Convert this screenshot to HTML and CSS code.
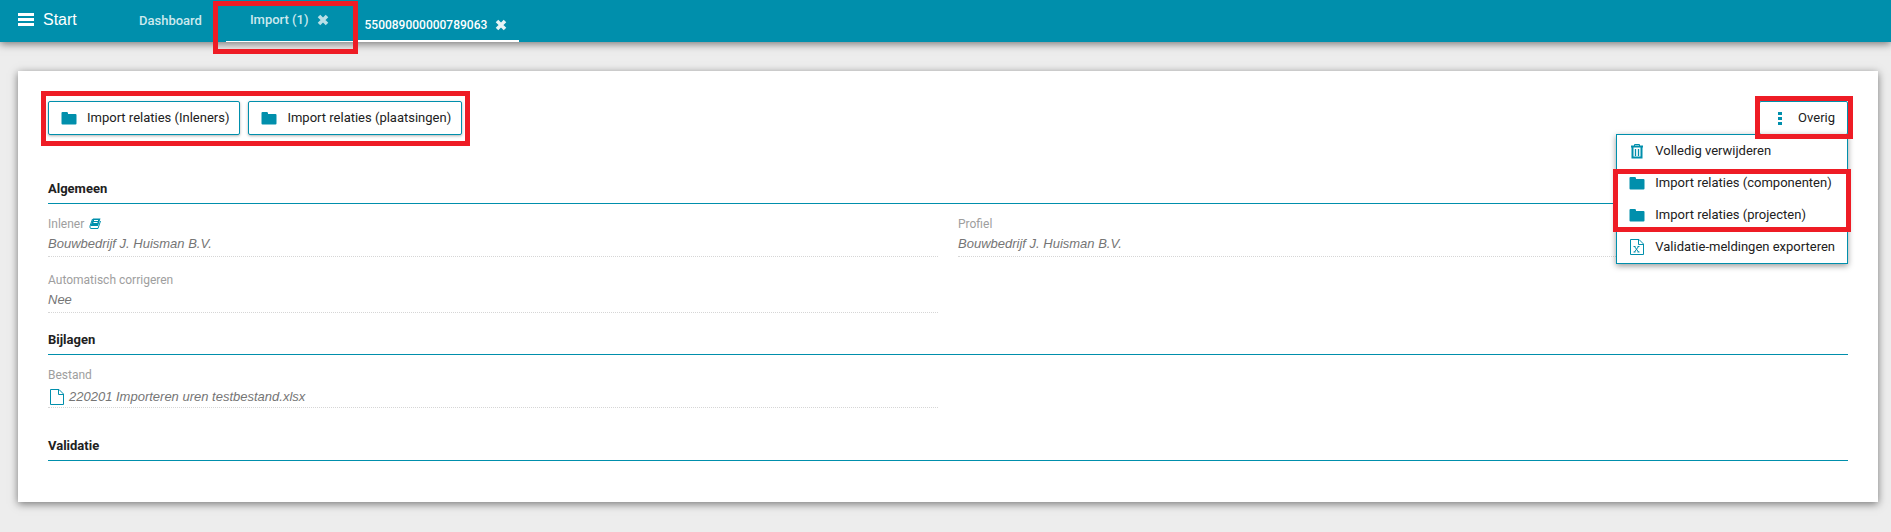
FILE: index.html
```html
<!DOCTYPE html>
<html lang="nl">
<head>
    <meta charset="UTF-8">
    <meta name="viewport" content="width=device-width, initial-scale=1.0">
    <title>Import</title>
    <link rel="stylesheet" href="styles.css">
</head>
<body>

    <!-- Shared icons -->
    <svg class="sprite" aria-hidden="true">
        <symbol id="folder" viewBox="0 0 16 16">
            <path d="M1.5 2h4.2q1.3 0 1.3 1.3V4h7.5q1 0 1 1v8.5q0 1-1 1h-13q-1 0-1-1V3q0-1 1-1z" fill="currentColor"/>
        </symbol>
        <symbol id="close" viewBox="0 0 12 12">
            <path d="M2 2l8 8M10 2l-8 8" stroke="currentColor" stroke-width="3.6" fill="none"/>
        </symbol>
        <symbol id="file" viewBox="0 0 16 16">
            <path d="M1.5.5H10L14.5 5v10.5h-13zM9.500.5v5h5" stroke="currentColor" fill="none"/>
        </symbol>
    </svg>

    <header class="topbar">
        <button type="button" class="start-button">
            <svg class="menu-icon" viewBox="0 0 16 14"><path d="M0 0h16v3H0zM0 5h16v3H0zM0 10h16v3H0z" fill="currentColor"/></svg>
            Start
        </button>
        <nav class="tabs">
            <a href="#" class="tab">Dashboard</a>
            <div class="tab tab-import highlight">
                <a href="#">Import (1)</a>
                <button type="button" class="close-button" aria-label="Sluiten"><svg><use href="#close"/></svg></button>
            </div>
            <div class="tab tab-active">
                <a href="#">550089000000789063</a>
                <button type="button" class="close-button" aria-label="Sluiten"><svg><use href="#close"/></svg></button>
            </div>
        </nav>
    </header>

    <main class="card">
        <div class="toolbar">
            <div class="button-group highlight">
                <button type="button" class="button"><svg class="icon"><use href="#folder"/></svg>Import relaties (Inleners)</button>
                <button type="button" class="button"><svg class="icon"><use href="#folder"/></svg>Import relaties (plaatsingen)</button>
            </div>
            <div class="dropdown">
                <button type="button" class="button button-more highlight">
                    <svg class="icon" viewBox="0 0 16 16"><path d="M6 2h4v3H6zM6 7h4v3H6zM6 12h4v3H6z" fill="currentColor"/></svg>Overig
                </button>
                <div class="menu">
                    <button type="button" class="menu-item">
                        <svg class="icon" viewBox="0 0 16 16"><path d="M5.500 3V1.500h5V3" stroke="currentColor" fill="none"/><path d="M2 3.500h12M3.500 4v10.500h9V4" stroke="currentColor" stroke-width="2" fill="none"/><path d="M6.500 6v7M9.500 6v7" stroke="currentColor" stroke-width="1.300" fill="none"/></svg>Volledig verwijderen
                    </button>
                    <div class="menu-group highlight">
                        <button type="button" class="menu-item"><svg class="icon"><use href="#folder"/></svg>Import relaties (componenten)</button>
                        <button type="button" class="menu-item"><svg class="icon"><use href="#folder"/></svg>Import relaties (projecten)</button>
                    </div>
                    <button type="button" class="menu-item">
                        <svg class="icon" viewBox="0 0 16 16"><path d="M1.500.5H10L14.500 5v10.500h-13zM9.500.5v5h5M5.500 7.500l4 5.500M9.500 7.500l-4 5.500M4.500 7.500h2M8.500 7.500h2M4.500 13h2M8.500 13h2" stroke="currentColor" fill="none"/></svg>Validatie-meldingen exporteren
                    </button>
                </div>
            </div>
        </div>

        <section class="section section-first">
            <h2>Algemeen</h2>
            <dl class="fields">
                <div class="field">
                    <dt>Inlener <svg class="book-icon" viewBox="0 0 12 12"><path d="M4 .5h7.500L9 8H1.500z" fill="currentColor"/><path d="M3.500 1L1 8q-.5 2.500 1 2.500h7L11.500 3" stroke="currentColor" fill="none"/><path d="M5 2.500h4M4.500 4.500h4" stroke="#fff" fill="none"/></svg></dt>
                    <dd>Bouwbedrijf J. Huisman B.V.</dd>
                </div>
                <div class="field">
                    <dt>Profiel</dt>
                    <dd>Bouwbedrijf J. Huisman B.V.</dd>
                </div>
                <div class="field">
                    <dt>Automatisch corrigeren</dt>
                    <dd>Nee</dd>
                </div>
            </dl>
        </section>

        <section class="section section-files">
            <h2>Bijlagen</h2>
            <dl class="fields">
                <div class="field">
                    <dt>Bestand</dt>
                    <dd class="file"><svg class="icon"><use href="#file"/></svg>220201 Importeren uren testbestand.xlsx</dd>
                </div>
            </dl>
        </section>

        <section class="section">
            <h2>Validatie</h2>
        </section>
    </main>

</body>
</html>
```
FILE: styles.css
```css
/* Global Styles */
* {
    margin: 0;
    padding: 0;
    box-sizing: border-box;
}

body {
    font-family: Roboto, "Liberation Sans", sans-serif;
    font-size: 13px;
    line-height: 16px;
    color: #212121;
    background-color: #ededed;
}

button {
    font: inherit;
    color: inherit;
    background: none;
    border: none;
    cursor: pointer;
}

a {
    color: inherit;
    text-decoration: none;
}

.sprite {
    display: none;
}

.icon {
    width: 16px;
    height: 16px;
    flex: none;
    color: #008fac;
}

/* Red marker around the import parts */
.highlight {
    position: relative;
}

.highlight::after {
    content: "";
    position: absolute;
    border: 5px solid #ee1c25;
    pointer-events: none;
    z-index: 5;
}

/* Top Bar */
.topbar {
    position: relative;
    display: flex;
    height: 42px;
    padding-left: 18px;
    color: #ffffff;
    background-color: #008fac;
    box-shadow: 0 2px 8px rgba(0, 0, 0, 0.5);
}

.start-button {
    display: flex;
    align-items: center;
    gap: 9px;
    width: 97px;
    padding-bottom: 3px;
    font-family: "Liberation Sans", sans-serif;
    font-size: 16px;
}

.menu-icon {
    width: 16px;
    height: 14px;
}

.tabs {
    display: flex;
}

.tab {
    display: flex;
    align-items: center;
    gap: 8px;
    padding: 0 24px 1px;
    font-weight: 500;
    color: #cce9ee;
}

.tab-import {
    border-bottom: 1px solid #ffffff;
}

.tab-import::after {
    top: 1px;
    right: -5px;
    bottom: -13px;
    left: -13px;
}

.tab-active {
    padding: 10px 12px 0;
    font-size: 12px;
    color: #ffffff;
    border-bottom: 2px solid #ffffff;
}

.close-button {
    display: flex;
    opacity: 0.9;
}

.close-button svg {
    width: 12px;
    height: 12px;
}

/* Card */
.card {
    margin: 29px 13px 30px 18px;
    padding: 30px 30px 41px;
    background: #ffffff;
    box-shadow: 0 2px 8px rgba(0, 0, 0, 0.5);
}

.toolbar {
    display: flex;
    justify-content: space-between;
}

.button-group {
    display: flex;
    gap: 8px;
}

.button-group::after {
    top: -10px;
    right: -8px;
    bottom: -11px;
    left: -7px;
}

.button {
    display: flex;
    align-items: center;
    gap: 10px;
    height: 34px;
    padding: 0 12px;
    background: #ffffff;
    border: 1px solid #008fac;
    border-radius: 2px;
    box-shadow: 0 1px 3px rgba(0, 0, 0, 0.3);
}

.button-group .button {
    padding-right: 10px;
}

.button-more::after {
    top: -6px;
    right: -6px;
    bottom: -5px;
    left: -5px;
}

/* Dropdown */
.dropdown {
    position: relative;
}

.menu {
    position: absolute;
    top: 33px;
    right: 0;
    background: #ffffff;
    border: 1px solid #008fac;
    box-shadow: 0 2px 6px rgba(0, 0, 0, 0.4);
}

.menu-item {
    display: flex;
    align-items: center;
    gap: 10px;
    width: 100%;
    height: 32px;
    padding: 0 12px;
    white-space: nowrap;
}

.menu-group::after {
    top: 2px;
    right: -4px;
    bottom: -1px;
    left: -4px;
}

/* Sections */
.section {
    padding-top: 16px;
}

.section-first {
    padding-top: 46px;
}

.section-files {
    padding-bottom: 11px;
}

h2 {
    padding-bottom: 6px;
    font-size: 13px;
    font-weight: bold;
    border-bottom: 1px solid #008fac;
}

.fields {
    display: grid;
    grid-template-columns: 1fr 1fr;
    column-gap: 20px;
}

.field {
    padding-top: 12px;
    margin-bottom: 3px;
}

dt {
    display: flex;
    align-items: center;
    gap: 5px;
    font-size: 12px;
    color: #9e9e9e;
}

.book-icon {
    width: 12px;
    height: 12px;
    color: #008fac;
}

dd {
    height: 25px;
    font-family: "Liberation Sans", sans-serif;
    font-style: italic;
    line-height: 24px;
    color: #757575;
    border-bottom: 1px dotted #d6d6d6;
}

.file {
    display: flex;
    align-items: center;
    gap: 4px;
    padding: 3px 0 0 1px;
}
```
